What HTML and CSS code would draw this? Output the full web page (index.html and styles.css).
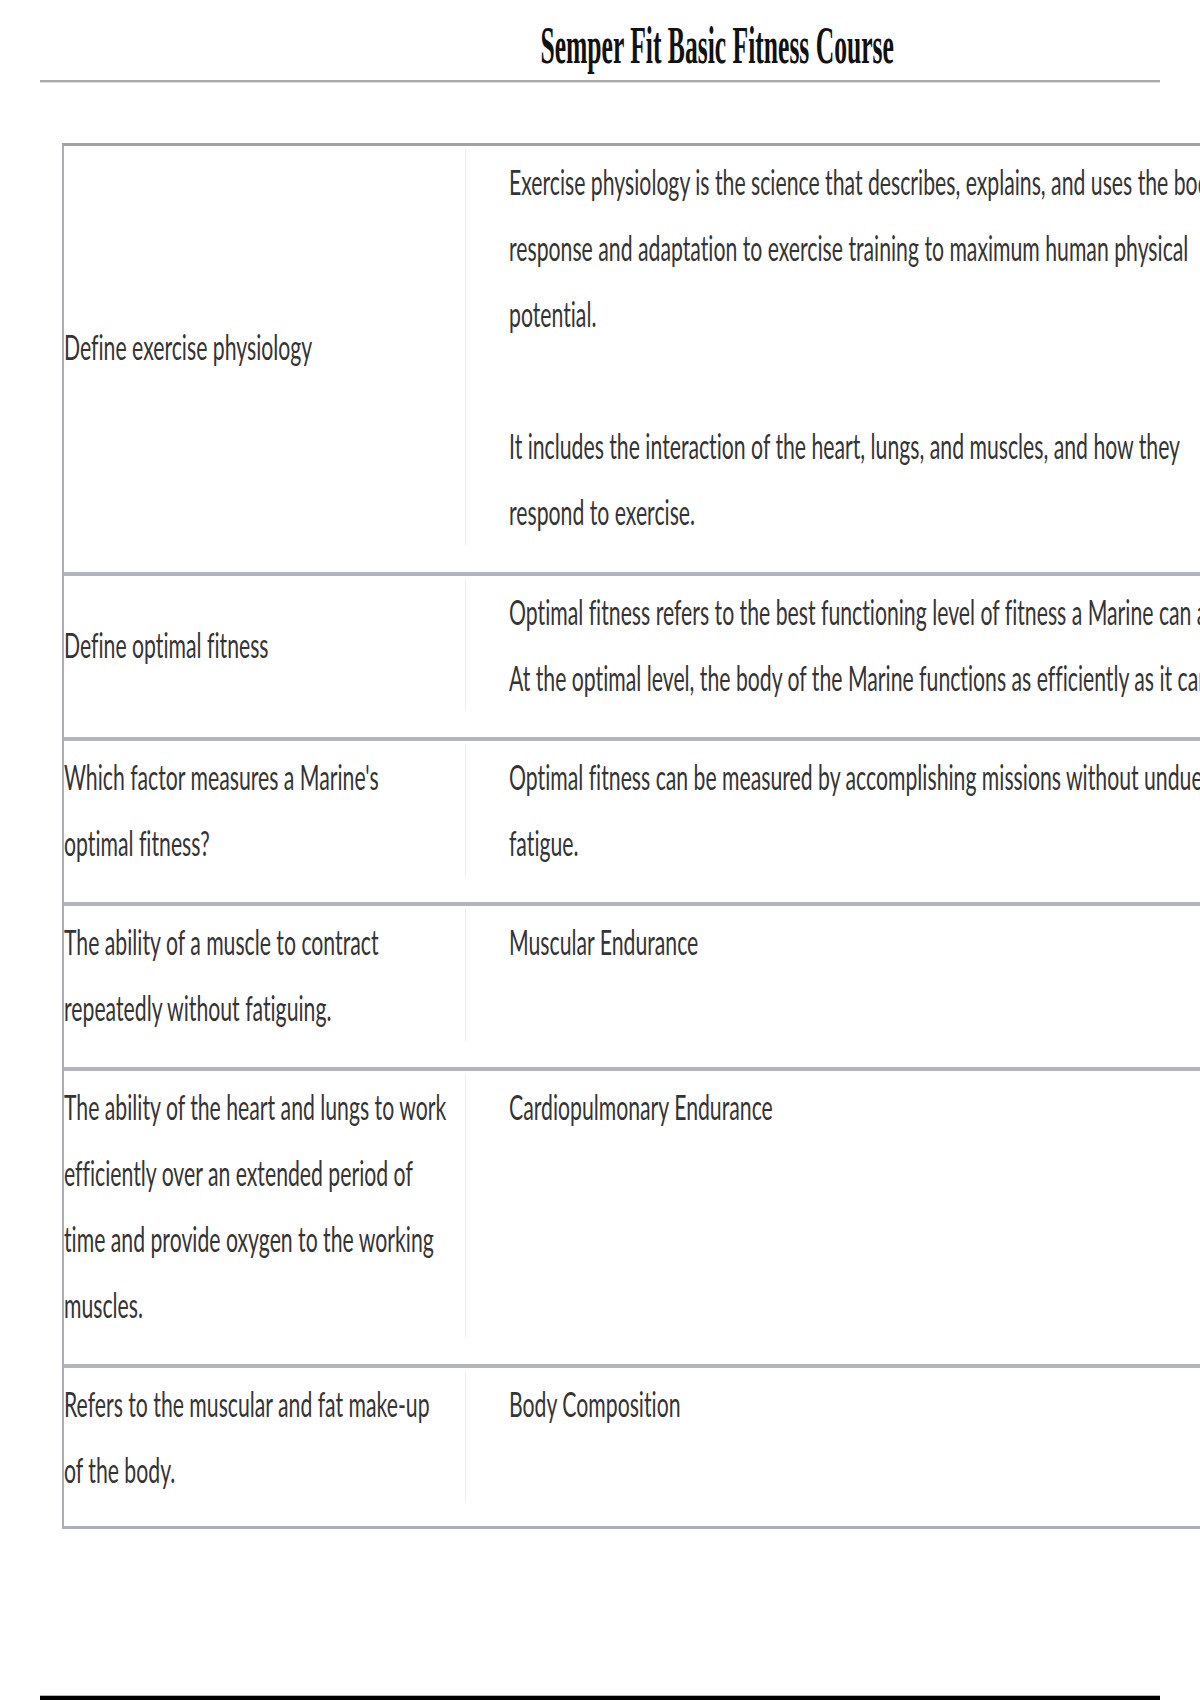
FILE: index.html
```html
<!DOCTYPE html>
<html lang="en">
<head>
<meta charset="utf-8">
<title>Semper Fit Basic Fitness Course</title>
<link rel="stylesheet" href="styles.css">
</head>
<body>
<div class="page">
  <header class="head">
    <h1 class="title"><span class="title-text">Semper Fit Basic Fitness Course</span></h1>
    <div class="rule"></div>
  </header>

  <section class="qa">
    <div class="row first">
      <div class="q"><span class="t">Define exercise physiology</span></div>
      <div class="a"><span class="t">Exercise physiology is the science that describes, explains, and uses the body's<br>response and adaptation to exercise training to maximum human physical<br>potential.<br><br>It includes the interaction of the heart, lungs, and muscles, and how they<br>respond to exercise.</span></div>
    </div>
    <div class="row">
      <div class="q"><span class="t">Define optimal fitness</span></div>
      <div class="a"><span class="t">Optimal fitness refers to the best functioning level of fitness a Marine can achieve.<br>At the optimal level, the body of the Marine functions as efficiently as it can.</span></div>
    </div>
    <div class="row">
      <div class="q"><span class="t">Which factor measures a Marine's<br>optimal fitness?</span></div>
      <div class="a"><span class="t">Optimal fitness can be measured by accomplishing missions without undue<br>fatigue.</span></div>
    </div>
    <div class="row">
      <div class="q"><span class="t">The ability of a muscle to contract<br>repeatedly without fatiguing.</span></div>
      <div class="a"><span class="t">Muscular Endurance</span></div>
    </div>
    <div class="row">
      <div class="q"><span class="t">The ability of the heart and lungs to work<br>efficiently over an extended period of<br>time and provide oxygen to the working<br>muscles.</span></div>
      <div class="a"><span class="t">Cardiopulmonary Endurance</span></div>
    </div>
    <div class="row last">
      <div class="q"><span class="t">Refers to the muscular and fat make-up<br>of the body.</span></div>
      <div class="a"><span class="t">Body Composition</span></div>
    </div>
  </section>

  <footer class="foot"></footer>
</div>
</body>
</html>
```
FILE: styles.css
```css
html, body {
  margin: 0;
  padding: 0;
  background: #ffffff;
  overflow: hidden;
}
body {
  width: 1200px;
  height: 1700px;
}
.page {
  display: flex;
  flex-direction: column;
  width: 1200px;
}
.head {
  display: flex;
  flex-direction: column;
}
.title {
  margin: 0;
  padding: 16px 0 0 234px;
  text-align: center;
  font-family: "Liberation Serif", "Times New Roman", serif;
  font-weight: bold;
  font-size: 52px;
  line-height: 60px;
  color: #111111;
  white-space: nowrap;
}
.title-text {
  display: inline-block;
  transform: scaleX(0.492);
  transform-origin: 50% 50%;
}
.rule {
  margin: 4px 40px 0 40px;
  height: 0;
  border-top: 2px solid #a9a9a9;
  border-bottom: 1px solid #dedede;
}
.qa {
  margin: 60px 0 0 62px;
  width: 1400px;
  border-top: 3px solid #a2a2a4;
  border-left: 2px solid #aaadb5;
  border-bottom: 3px solid #aeb0b7;
  font-family: Lato, "Liberation Sans", sans-serif;
  font-size: 34px;
  line-height: 66px;
  color: #343434;
  font-variant-ligatures: none;
}
.row {
  display: grid;
  grid-template-columns: 402px minmax(0, 1fr);
  padding: 3px 0 26px 0;
  border-top: 4px solid #b3b5bc;
}
.row.first {
  border-top: none;
  padding-bottom: 27px;
}
.row.last {
  padding-bottom: 23px;
}
.q {
  display: flex;
  align-items: center;
  border-right: 1px solid #eeeeee;
  min-width: 0;
}
.a {
  padding-left: 43px;
  min-width: 0;
}
.t {
  display: inline-block;
  white-space: nowrap;
  transform: scaleX(0.624);
  transform-origin: 0 50%;
}
.foot {
  margin: 166px 40px 0 40px;
  height: 5px;
  background: #000000;
  border-top: 1px solid #b5b5b5;
}
```
